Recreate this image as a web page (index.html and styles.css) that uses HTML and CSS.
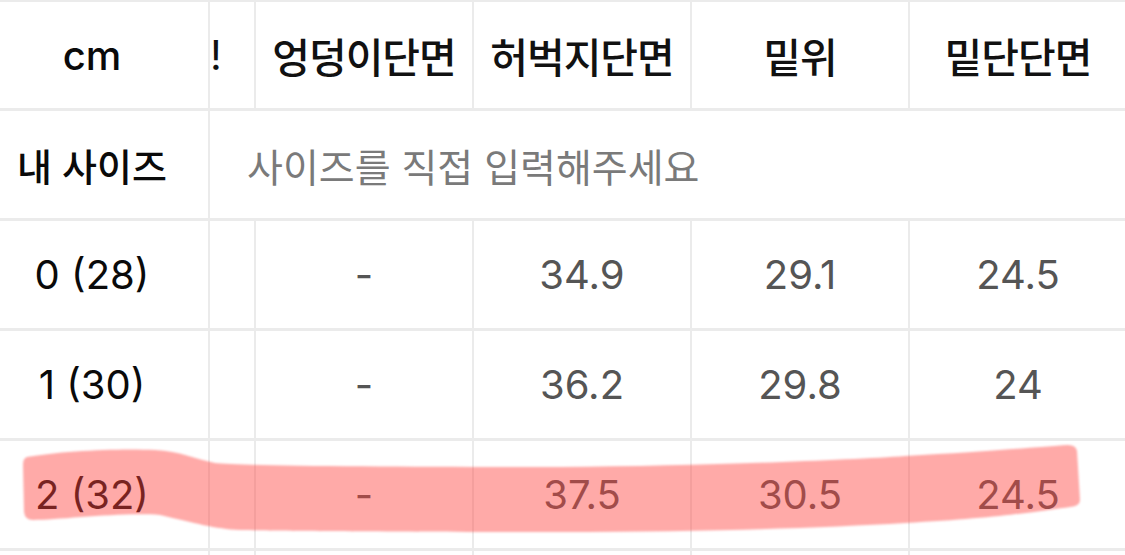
FILE: index.html
```html
<!DOCTYPE html>
<html lang="ko">
<head>
<meta charset="utf-8">
<title>사이즈표</title>
<link rel="stylesheet" href="styles.css">
</head>
<body>
<div class="sheet">
  <div class="grid">
    <div class="cell head first">cm</div>
    <div class="cell head cut">!</div>
    <div class="cell head">엉덩이단면</div>
    <div class="cell head">허벅지단면</div>
    <div class="cell head">밑위</div>
    <div class="cell head">밑단단면</div>

    <div class="cell first mine">내 사이즈</div>
    <div class="cell input">사이즈를 직접 입력해주세요</div>

    <div class="cell first">0 (28)</div>
    <div class="cell cut"></div>
    <div class="cell val">-</div>
    <div class="cell val">34.9</div>
    <div class="cell val">29.1</div>
    <div class="cell val">24.5</div>

    <div class="cell first">1 (30)</div>
    <div class="cell cut"></div>
    <div class="cell val">-</div>
    <div class="cell val">36.2</div>
    <div class="cell val">29.8</div>
    <div class="cell val">24</div>

    <div class="cell first">2 (32)</div>
    <div class="cell cut"></div>
    <div class="cell val">-</div>
    <div class="cell val">37.5</div>
    <div class="cell val">30.5</div>
    <div class="cell val">24.5</div>

    <div class="cell first"></div>
    <div class="cell cut"></div>
    <div class="cell val"></div>
    <div class="cell val"></div>
    <div class="cell val"></div>
    <div class="cell val"></div>
  </div>
  <svg class="marker" width="1125" height="555" viewBox="0 0 1125 555" aria-hidden="true">
    <path d="M 27 457 C 60 451, 120 448, 155 450 C 180 451, 195 459, 215 463 C 240 466, 400 467, 560 467 C 700 466, 850 460, 905 456 C 980 452, 1040 447, 1068 445 Q 1076 445, 1077 451 L 1080 500 Q 1080 506, 1070 507 C 1040 511, 1000 518, 905 523 C 820 528, 700 532, 560 532 C 400 532, 280 531, 240 530 C 215 529, 195 523, 160 515 C 120 512, 60 520, 33 520 Q 25 520, 24 512 L 23 465 Q 23 458, 27 457 Z"/>
  </svg>
</div>
</body>
</html>
```
FILE: styles.css
```css
html, body {
  margin: 0;
  padding: 0;
  background: #ffffff;
}

body {
  overflow: hidden;
  font-family: "Inter", "Noto Sans CJK KR", sans-serif;
}

.sheet {
  position: relative;
  width: 1125px;
  height: 555px;
  overflow: hidden;
}

.grid {
  display: grid;
  grid-template-columns: 208px 44px 216px 216px 216px 216px;
  grid-template-rows: 106px;
  grid-auto-rows: 107px;
  column-gap: 2px;
  row-gap: 3px;
  padding-top: 2px;
  background: #ebebeb;
  width: max-content;
}

.cell {
  background: #ffffff;
  display: flex;
  align-items: center;
  justify-content: center;
  font-size: 40px;
  color: #555555;
  white-space: nowrap;
  overflow: hidden;
}

.head {
  color: #111111;
  font-weight: 500;
  font-size: 41px;
  letter-spacing: -1px;
}

.first {
  color: #0a0a0a;
  padding-right: 24px;
  font-weight: 400;
}

.head.first {
  font-size: 40px;
  font-weight: 500;
  letter-spacing: 0;
}

.mine {
  font-size: 38px;
  font-weight: 500;
}

.cut {
  justify-content: flex-start;
  padding-left: 0;
}

.head.cut {
  font-weight: 400;
}

.input {
  grid-column: 2 / -1;
  justify-content: flex-start;
  padding-left: 37px;
  font-size: 39px;
  color: #7a7a7a;
  font-weight: 400;
}

.val {
  font-weight: 400;
}

.marker {
  position: absolute;
  left: 0;
  top: 0;
  pointer-events: none;
}

.marker path {
  fill: rgba(255, 66, 62, 0.45);
  filter: blur(1px);
}
```
